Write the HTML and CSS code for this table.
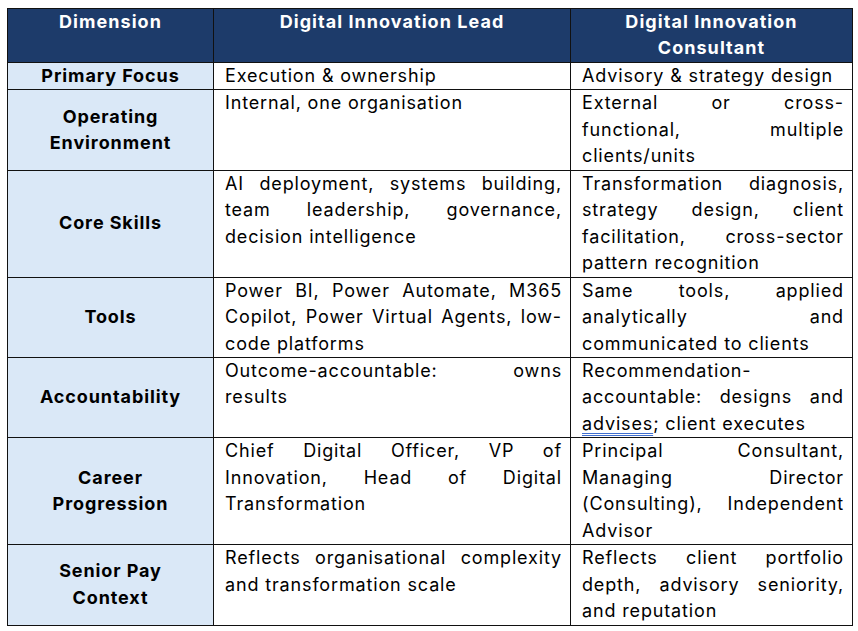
FILE: index.html
```html
<!DOCTYPE html>
<html lang="en">
<head>
<meta charset="utf-8">
<title>Digital Innovation Lead vs Consultant</title>
<link rel="stylesheet" href="styles.css">
</head>
<body>
<table class="cmp">
  <colgroup>
    <col class="c1">
    <col class="c2">
    <col class="c3">
  </colgroup>
  <thead>
    <tr>
      <th>Dimension</th>
      <th>Digital Innovation Lead</th>
      <th>Digital Innovation<br>Consultant</th>
    </tr>
  </thead>
  <tbody>
    <tr>
      <td class="dim">Primary Focus</td>
      <td><span class="ln">Execution &amp; ownership</span></td>
      <td><span class="ln">Advisory &amp; strategy design</span></td>
    </tr>
    <tr>
      <td class="dim">Operating<br>Environment</td>
      <td><span class="ln">Internal, one organisation</span></td>
      <td><span class="ln j">External or cross-</span><span class="ln j">functional, multiple</span><span class="ln">clients/units</span></td>
    </tr>
    <tr>
      <td class="dim">Core Skills</td>
      <td><span class="ln j">AI deployment, systems building,</span><span class="ln j">team leadership, governance,</span><span class="ln">decision intelligence</span></td>
      <td><span class="ln j">Transformation diagnosis,</span><span class="ln j">strategy design, client</span><span class="ln j">facilitation, cross-sector</span><span class="ln">pattern recognition</span></td>
    </tr>
    <tr>
      <td class="dim">Tools</td>
      <td><span class="ln j">Power BI, Power Automate, M365</span><span class="ln j">Copilot, Power Virtual Agents, low-</span><span class="ln">code platforms</span></td>
      <td><span class="ln j">Same tools, applied</span><span class="ln j">analytically and</span><span class="ln">communicated to clients</span></td>
    </tr>
    <tr>
      <td class="dim">Accountability</td>
      <td><span class="ln j">Outcome-accountable: owns</span><span class="ln">results</span></td>
      <td><span class="ln">Recommendation-</span><span class="ln j">accountable: designs and</span><span class="ln"><span class="gram">advises</span>; client executes</span></td>
    </tr>
    <tr>
      <td class="dim">Career<br>Progression</td>
      <td><span class="ln j">Chief Digital Officer, VP of</span><span class="ln j">Innovation, Head of Digital</span><span class="ln">Transformation</span></td>
      <td><span class="ln j">Principal Consultant,</span><span class="ln j">Managing Director</span><span class="ln j">(Consulting), Independent</span><span class="ln">Advisor</span></td>
    </tr>
    <tr>
      <td class="dim">Senior Pay<br>Context</td>
      <td><span class="ln j">Reflects organisational complexity</span><span class="ln">and transformation scale</span></td>
      <td><span class="ln j">Reflects client portfolio</span><span class="ln j">depth, advisory seniority,</span><span class="ln">and reputation</span></td>
    </tr>
  </tbody>
</table>
</body>
</html>
```
FILE: styles.css
```css
html, body {
  background: #ffffff;
}
body {
  margin: 8px 0 0 7px;
  font-family: "Inter", "Liberation Sans", sans-serif;
  font-size: 18px;
  letter-spacing: 0.85px;
  color: #000000;
}
.cmp {
  border-collapse: collapse;
  table-layout: fixed;
  width: 845px;
  line-height: 26.45px;
}
.c1 { width: 206px; }
.c2 { width: 357px; }
.c3 { width: 282px; }
.cmp th,
.cmp td {
  border: 1.3px solid #111111;
  padding: 0 8px 0 11px;
  vertical-align: top;
}
.cmp th {
  background: #1d3b6a;
  color: #ffffff;
  font-weight: 700;
  letter-spacing: 1.05px;
  text-align: center;
  height: 53px;
  padding: 0 8px;
}
.cmp td.dim {
  background: #dae8f7;
  font-weight: 700;
  letter-spacing: 0.9px;
  text-align: center;
  vertical-align: middle;
  padding: 0 8px;
}
.ln {
  display: block;
  text-align: left;
  white-space: nowrap;
}
.ln.j {
  white-space: normal;
  text-align: justify;
  text-align-last: justify;
}
.gram {
  text-decoration: underline double #3f6fd0;
  text-decoration-thickness: 1px;
  text-underline-offset: 3px;
}
```
